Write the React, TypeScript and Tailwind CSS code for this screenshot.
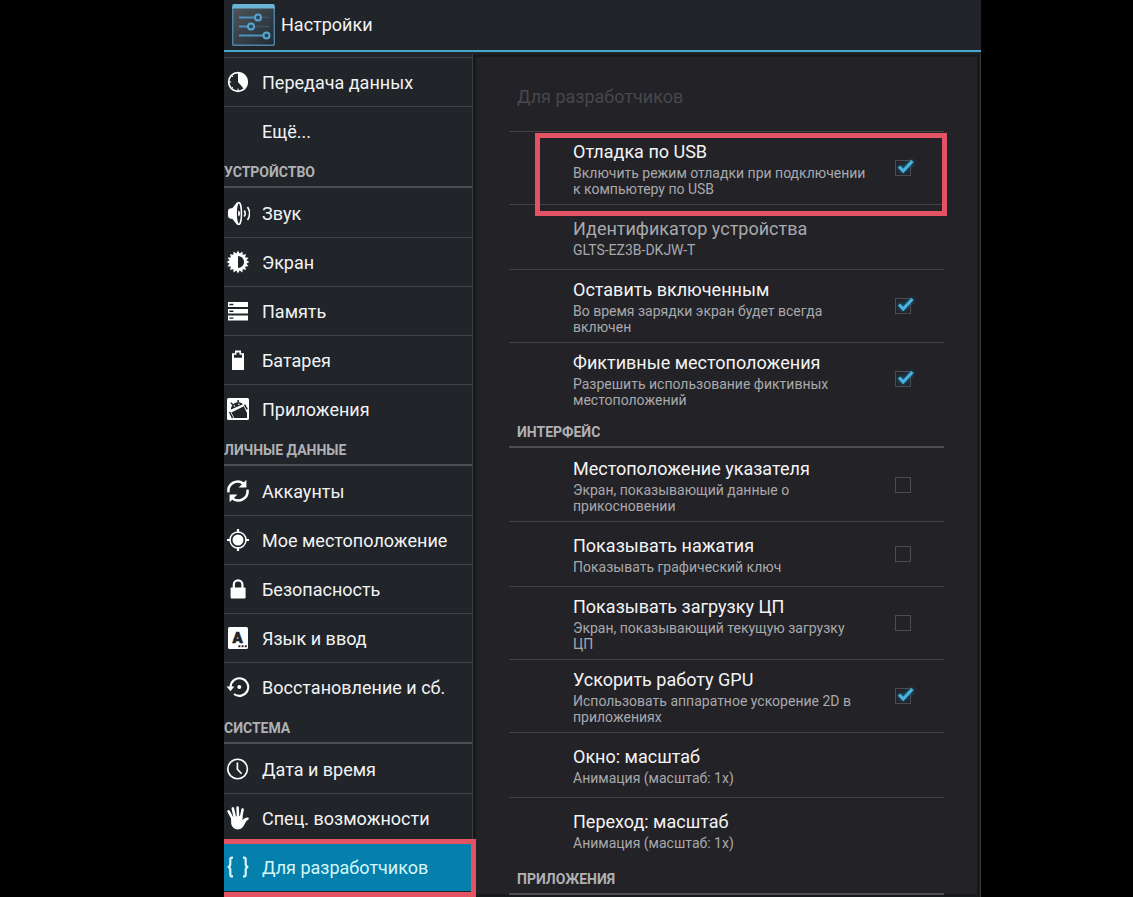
import { useState } from "react";
import type { ReactNode } from "react";
import { clsx } from "clsx";

type NavItem = { label: string; icon?: ReactNode; active?: boolean };
type NavGroup = { title?: string; items: NavItem[] };

type Pref = {
  id: string;
  title: string;
  summary: string;
  checked?: boolean;
  readOnly?: boolean;
  highlighted?: boolean;
};
type PrefGroup = { title?: string; prefs: Pref[] };

const GEAR_TEETH = Array.from({ length: 16 }, (_, i) => i * 22.5);

function Icon({ children }: { children: ReactNode }) {
  return (
    <svg viewBox="0 0 24 24" className="size-6" fill="none" stroke="none" aria-hidden="true">
      {children}
    </svg>
  );
}

const icons = {
  data: (
    <Icon>
      <circle cx="12" cy="12" r="9.3" stroke="#fff" strokeWidth="1.7" />
      <path d="M12 12V2.5a9.5 9.5 0 0 1 6.2 16.7z" fill="#fff" />
      <path d="M12 21v-2.5M3 12h2.2M5.6 5.6l1.3 1.3M5.6 18.4l1.3-1.3" stroke="#fff" strokeWidth="1" />
    </Icon>
  ),
  sound: (
    <Icon>
      <path d="M2 10.2Q2 8 4 7.6L6.5 7L11.4 .8V24.2L6.5 18L4 17.4Q2 17 2 14.8z" fill="#fff" />
      <ellipse cx="12.8" cy="12.5" rx="2.7" ry="11" fill="#212429" stroke="#fff" strokeWidth="1.5" />
      <path d="M12.2 9.5a3.2 3.2 0 0 1 0 6z" fill="#fff" />
      <path d="M18.2 9.5q2 3 0 6M21.5 6q4.3 6.5 0 13" stroke="#fff" strokeWidth="1.6" />
    </Icon>
  ),
  display: (
    <Icon>
      {GEAR_TEETH.map((angle) => (
        <path key={angle} d="M9.8 4.6L12 .6l2.2 4z" fill="#fff" transform={`rotate(${angle} 12 12)`} />
      ))}
      <circle cx="12" cy="12" r="7.3" stroke="#fff" strokeWidth="2.4" />
      <path d="M12 5a7 7 0 0 0 0 14z" fill="#fff" />
    </Icon>
  ),
  storage: (
    <Icon>
      <path
        d="M2 3h20v5H2zM2 10h20v4.600H2zM2 16.600h20v5H2zM3.400 4.800v1.400h4V4.800zM3.400 11.600V13h4v-1.400zM3.400 18.400v1.400h4v-1.400z"
        fill="#fff"
        fillRule="evenodd"
      />
    </Icon>
  ),
  battery: (
    <Icon>
      <path d="M6 22V5.2h3V2.6h6v2.6h3V22zM8 6.8v3h8v-3h-2.5V4.4h-3v2.4z" fill="#fff" fillRule="evenodd" />
    </Icon>
  ),
  apps: (
    <Icon>
      <rect x="1" y="1" width="22" height="22" rx="1.6" fill="#fff" />
      <path d="M5 12.6C4.600 6.600 12 2.800 17 7.200z" fill="#212429" />
      <path d="M5.400 15.400L17.800 9.200L21 16V21H8.200z" fill="#212429" />
      <path d="M3.600 15l3 6.200M18.600 7.600l2.600 4.800M6.800 7.800L4.800 5.800M12.200 6V3" stroke="#212429" strokeWidth="1.500" />
      <circle cx="8.400" cy="9" r=".8" fill="#fff" />
      <circle cx="12.800" cy="7.200" r=".8" fill="#fff" />
    </Icon>
  ),
  sync: (
    <Icon>
      <path d="M2.6 13.4A9.2 9.2 0 0 1 17.4 4.6M21.4 10.6A9.2 9.2 0 0 1 6.6 19.4" stroke="#fff" strokeWidth="2.5" />
      <path d="M20.4 .8v7.6h-7.8zM3.6 23.2v-7.6h7.8z" fill="#fff" />
    </Icon>
  ),
  location: (
    <Icon>
      <circle cx="12" cy="12" r="5.5" fill="#fff" />
      <circle cx="12" cy="12" r="8" stroke="#fff" strokeWidth="1.5" />
      <path d="M12 1v3.4M12 19.6V23M1 12h3.4M19.6 12H23" stroke="#fff" strokeWidth="2.2" />
    </Icon>
  ),
  lock: (
    <Icon>
      <rect x="4.6" y="10.6" width="15" height="10.8" rx=".8" fill="#fff" />
      <path d="M7.8 11V7.6a4.3 4.3 0 0 1 8.6 0V11" stroke="#fff" strokeWidth="2.2" />
    </Icon>
  ),
  language: (
    <Icon>
      <rect x="2" y="1" width="20" height="22" rx="1.6" fill="#fff" />
      <text
        x="11.6"
        y="17"
        textAnchor="middle"
        className="font-['Roboto',sans-serif] text-[15px] font-black"
        fill="#212429"
        stroke="#212429"
        strokeWidth=".6"
      >
        A
      </text>
      <path d="M12.4 19.2h2v2h-2zM15.6 19.2h2v2h-2zM18.8 19.2h2v2h-2z" fill="#212429" />
    </Icon>
  ),
  restore: (
    <Icon>
      <path d="M4.6 12A8.8 8.8 0 1 1 8 19" stroke="#fff" strokeWidth="2.1" />
      <path d="M.6 11.6h7.8l-3.9 4.6z" fill="#fff" />
      <circle cx="13.3" cy="12" r="2" fill="#fff" />
    </Icon>
  ),
  clock: (
    <Icon>
      <circle cx="11.6" cy="12" r="9.8" stroke="#fff" strokeWidth="1.6" />
      <path d="M11.4 5.4v6.8l4.2 4.6" stroke="#fff" strokeWidth="1.7" />
    </Icon>
  ),
  hand: (
    <Icon>
      <path
        d="M6.6 12.6L2.6 5.4M8.8 11L6.8 2.4M12 11l-.4-9.4M15 11.6l1.6-8"
        stroke="#fff"
        strokeWidth="2.6"
        strokeLinecap="round"
      />
      <path
        d="M5 11l11.4-1.2.2 4.2q2.6-2.6 5.2-2.4 1.8.3.8 1.6-2.4 1.4-3.8 4.6-2.2 5.6-7 5.6-5.2 0-6.6-5.4z"
        fill="#fff"
      />
    </Icon>
  ),
  braces: (
    <Icon>
      <path
        d="M7 2.6H6Q4.3 2.6 4.3 4.6V9Q4.3 12 1.6 12Q4.3 12 4.3 15v4.4Q4.3 21.4 6 21.4H7M17 2.6h1q1.7 0 1.7 2V9q0 3 2.7 3-2.7 0-2.7 3v4.4q0 2-1.7 2h-1"
        stroke="#d5f7fa"
        strokeWidth="2.2"
      />
    </Icon>
  ),
};

const navGroups: NavGroup[] = [
  { items: [{ label: "Передача данных", icon: icons.data }, { label: "Ещё..." }] },
  {
    title: "УСТРОЙСТВО",
    items: [
      { label: "Звук", icon: icons.sound },
      { label: "Экран", icon: icons.display },
      { label: "Память", icon: icons.storage },
      { label: "Батарея", icon: icons.battery },
      { label: "Приложения", icon: icons.apps },
    ],
  },
  {
    title: "ЛИЧНЫЕ ДАННЫЕ",
    items: [
      { label: "Аккаунты", icon: icons.sync },
      { label: "Мое местоположение", icon: icons.location },
      { label: "Безопасность", icon: icons.lock },
      { label: "Язык и ввод", icon: icons.language },
      { label: "Восстановление и сб.", icon: icons.restore },
    ],
  },
  {
    title: "СИСТЕМА",
    items: [
      { label: "Дата и время", icon: icons.clock },
      { label: "Спец. возможности", icon: icons.hand },
      { label: "Для разработчиков", icon: icons.braces, active: true },
    ],
  },
];

const prefGroups: PrefGroup[] = [
  {
    prefs: [
      {
        id: "usb-debug",
        title: "Отладка по USB",
        summary: "Включить режим отладки при подключении к компьютеру по USB",
        checked: true,
        highlighted: true,
      },
      { id: "device-id", title: "Идентификатор устройства", summary: "GLTS-EZ3B-DKJW-T", readOnly: true },
      {
        id: "stay-awake",
        title: "Оставить включенным",
        summary: "Во время зарядки экран будет всегда включен",
        checked: true,
      },
      {
        id: "mock-location",
        title: "Фиктивные местоположения",
        summary: "Разрешить использование фиктивных местоположений",
        checked: true,
      },
    ],
  },
  {
    title: "ИНТЕРФЕЙС",
    prefs: [
      {
        id: "pointer",
        title: "Местоположение указателя",
        summary: "Экран, показывающий данные о прикосновении",
        checked: false,
      },
      { id: "touches", title: "Показывать нажатия", summary: "Показывать графический ключ", checked: false },
      {
        id: "cpu",
        title: "Показывать загрузку ЦП",
        summary: "Экран, показывающий текущую загрузку\nЦП",
        checked: false,
      },
      {
        id: "gpu",
        title: "Ускорить работу GPU",
        summary: "Использовать аппаратное ускорение 2D в приложениях",
        checked: true,
      },
      { id: "window-scale", title: "Окно: масштаб", summary: "Анимация (масштаб: 1x)" },
      { id: "transition-scale", title: "Переход: масштаб", summary: "Анимация (масштаб: 1x)" },
    ],
  },
  { title: "ПРИЛОЖЕНИЯ", prefs: [] },
];

function SettingsLogo() {
  return (
    <svg viewBox="0 0 43 42" className="h-[42px] w-[43px] shrink-0" fill="none" aria-hidden="true">
      <defs>
        <linearGradient id="logo-bg" x1="0" y1="0" x2="1" y2="1">
          <stop offset="0" stopColor="#50565b" />
          <stop offset="1" stopColor="#202a33" />
        </linearGradient>
      </defs>
      <rect x=".7" y=".7" width="41.6" height="40.6" rx="1" fill="url(#logo-bg)" stroke="#4d83a5" strokeWidth="1.4" />
      <path d="M1.5 0h40l1.5 4.5H0z" fill="#6ab4d8" />
      <path d="M7 13.5h16M7 22.5h9M7 31.5h24" stroke="#4b93bd" strokeWidth="2" />
      <path d="M29 13.5h8M22 22.5h15" stroke="#3a5263" strokeWidth="1.5" />
      <g fill="#28465a" stroke="#5aa5d0" strokeWidth="2">
        <circle cx="26" cy="13.5" r="3" />
        <circle cx="19" cy="22.5" r="3" />
        <circle cx="34.5" cy="31.5" r="3" />
      </g>
    </svg>
  );
}

function SectionTitle({ children, className }: { children: ReactNode; className?: string }) {
  return (
    <h2
      className={clsx(
        "flex h-[33px] items-center border-b-2 border-[#4d4e53] pt-0.5 text-sm font-bold text-[#b0b1b4]",
        className,
      )}
    >
      {children}
    </h2>
  );
}

function NavRow({ item, divider }: { item: NavItem; divider: boolean }) {
  return (
    <li className="relative">
      <a
        href="#"
        aria-current={item.active ? "page" : undefined}
        className={clsx(
          "flex h-[49px] items-center gap-2.5 border-t text-lg whitespace-nowrap",
          divider ? "border-[#3f4348]" : "border-transparent",
          item.active ? "bg-[#057fac] text-[#d5f7fa]" : "text-[#f2f3f4]",
        )}
      >
        <span className="flex w-7 shrink-0 justify-center">{item.icon}</span>
        <span className="pt-0.5">{item.label}</span>
      </a>
      {item.active && (
        <span className="pointer-events-none absolute -top-[3px] -right-1 -bottom-1.5 left-0 z-10 border-5 border-l-0 border-[#e45364]" />
      )}
    </li>
  );
}

function PrefRow({ pref, divider }: { pref: Pref; divider: boolean }) {
  const [checked, setChecked] = useState(!!pref.checked);
  const hasCheckbox = pref.checked !== undefined;
  const text = (
    <>
      <span className={clsx("block text-lg leading-[26px]", pref.readOnly ? "text-[#a9a9ac]" : "text-[#f4f4f5]")}>
        {pref.title}
      </span>
      <span className="block text-sm leading-4 whitespace-pre-line text-[#a9a9ac]">{pref.summary}</span>
    </>
  );

  return (
    <li
      className={clsx(
        "relative flex min-h-[65px] items-center border-t py-[7px] pl-16",
        divider ? "border-[#414146]" : "border-transparent",
      )}
    >
      {hasCheckbox ? (
        <label htmlFor={pref.id} className="min-w-0 flex-1">
          {text}
        </label>
      ) : pref.readOnly ? (
        <div className="min-w-0 flex-1">{text}</div>
      ) : (
        <button type="button" className="min-w-0 flex-1 text-left">
          {text}
        </button>
      )}
      {hasCheckbox && (
        <span className="relative mr-[33px] ml-6 size-4 shrink-0">
          <input
            id={pref.id}
            type="checkbox"
            checked={checked}
            onChange={(e) => setChecked(e.target.checked)}
            className="block size-4 appearance-none border border-[#4c4c51]"
          />
          {checked && (
            <svg
              viewBox="0 0 24 20"
              className="pointer-events-none absolute -top-1 -left-0.5 h-5 w-6 drop-shadow-[0_0_2px_#087da8]"
              fill="none"
              aria-hidden="true"
            >
              <path d="M6 10.5l4.2 4.5L19.5 5" stroke="#4cb1dc" strokeWidth="3.2" />
            </svg>
          )}
        </span>
      )}
      {pref.highlighted && (
        <span className="pointer-events-none absolute top-px -right-[3px] -bottom-3 left-[26px] z-10 border-5 border-[#e45364]" />
      )}
    </li>
  );
}

export default function App() {
  return (
    <div className="min-h-screen bg-black pr-38 pl-56 font-['Roboto','Noto_Sans',sans-serif]">
      <div className="flex min-h-screen flex-col overflow-hidden bg-[#212429]">
        <header className="flex h-[52px] shrink-0 items-center gap-1.5 border-b-2 border-[#4aa5ca] pl-2">
          <SettingsLogo />
          <h1 className="text-lg text-[#f2f3f4]">Настройки</h1>
        </header>
        <div className="flex flex-1">
          <nav className="w-[248px] shrink-0 pt-[5px]">
            {navGroups.map((group, g) => (
              <section key={g}>
                {group.title && <SectionTitle>{group.title}</SectionTitle>}
                <ul>
                  {group.items.map((item, i) => (
                    <NavRow key={item.label} item={item} divider={!group.title || i > 0} />
                  ))}
                </ul>
              </section>
            ))}
          </nav>
          <main className="mt-0.5 min-w-0 flex-1 border-x border-[#3a3e41] bg-[#232227] px-9 pt-1 shadow-[inset_0_0_0_3px_#17191c]">
            <h2 className="flex h-[73px] items-center pt-1 pl-2 text-lg text-[#47474c]">Для разработчиков</h2>
            {prefGroups.map((group, g) => (
              <section key={g}>
                {group.title && <SectionTitle className="pl-2">{group.title}</SectionTitle>}
                <ul>
                  {group.prefs.map((pref, i) => (
                    <PrefRow key={pref.id} pref={pref} divider={!group.title || i > 0} />
                  ))}
                </ul>
              </section>
            ))}
          </main>
        </div>
      </div>
    </div>
  );
}
